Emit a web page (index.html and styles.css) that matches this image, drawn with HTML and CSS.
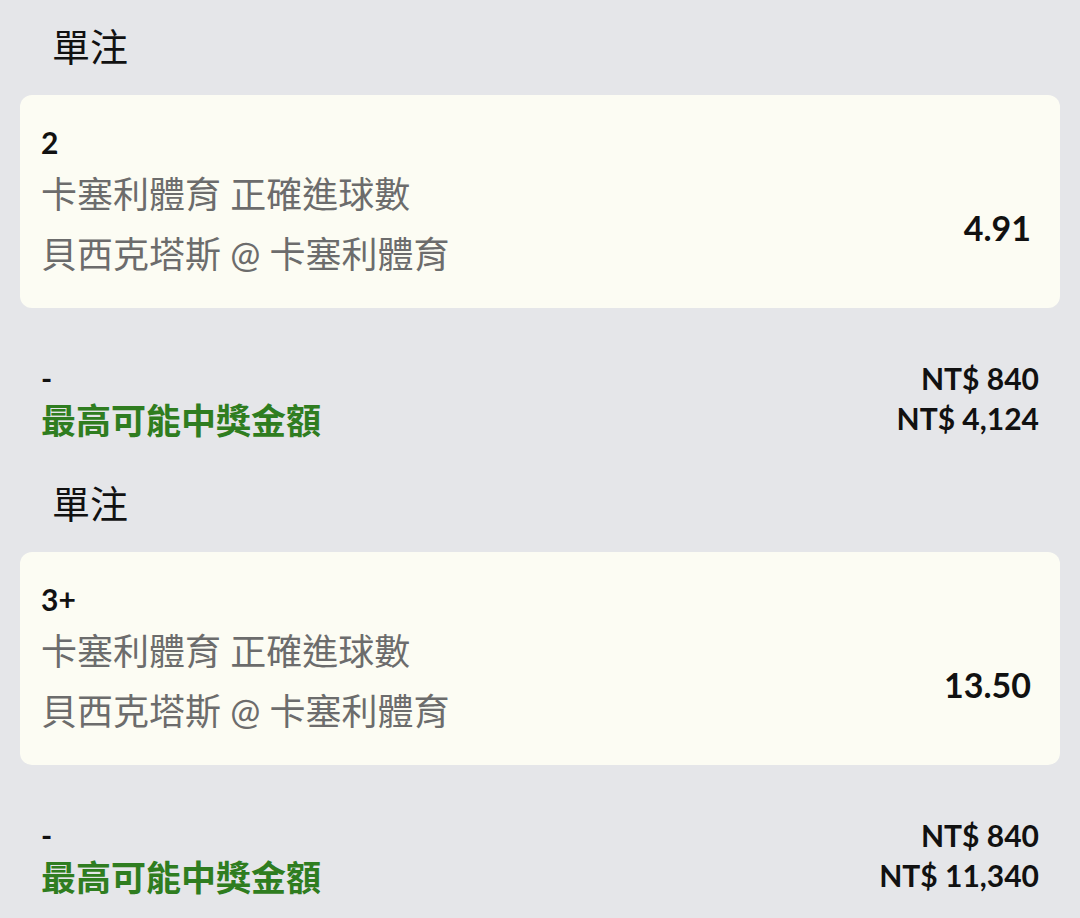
FILE: index.html
```html
<!DOCTYPE html>
<html>
<head>
	<meta charset="utf-8" />
	<title>單注</title>
	<link rel="stylesheet" href="styles.css">
</head>
<body>
	<div id="main">
		<section class="bet">
			<h2 class="bet-title">單注</h2>
			<div class="card">
				<div class="pick">2</div>
				<div class="card-body">
					<div class="info">
						<div class="line">卡塞利體育 正確進球數</div>
						<div class="line">貝西克塔斯 @ 卡塞利體育</div>
					</div>
					<div class="odds">4.91</div>
				</div>
			</div>
			<div class="summary">
				<div class="row"><span class="label">-</span><span class="amount">NT$ 840</span></div>
				<div class="row"><span class="label win">最高可能中獎金額</span><span class="amount">NT$ 4,124</span></div>
			</div>
		</section>

		<section class="bet">
			<h2 class="bet-title">單注</h2>
			<div class="card">
				<div class="pick">3+</div>
				<div class="card-body">
					<div class="info">
						<div class="line">卡塞利體育 正確進球數</div>
						<div class="line">貝西克塔斯 @ 卡塞利體育</div>
					</div>
					<div class="odds">13.50</div>
				</div>
			</div>
			<div class="summary">
				<div class="row"><span class="label">-</span><span class="amount">NT$ 840</span></div>
				<div class="row"><span class="label win">最高可能中獎金額</span><span class="amount">NT$ 11,340</span></div>
			</div>
		</section>
	</div>
</body>
</html>
```

FILE: styles.css
```css
html, body {
	padding: 0;
	margin: 0;
}
body {
	background-color: #e5e6e9;
	font-family: Lato, "Noto Sans CJK TC", sans-serif;
	color: #111;
}
#main {
	padding: 21px 20px 0 20px;
}
.bet {
	margin-bottom: 40px;
}
.bet-title {
	margin: 0 0 24px 0;
	padding-left: 32px;
	font-size: 38px;
	font-weight: normal;
	line-height: 50px;
}
.card {
	background-color: #fcfcf3;
	border-radius: 12px;
	padding: 25px 29px 24px 21px;
}
.pick {
	font-size: 30px;
	font-weight: bold;
	line-height: 44px;
}
.card-body {
	display: flex;
	align-items: center;
	justify-content: space-between;
}
.line {
	font-size: 36px;
	line-height: 60px;
	color: #6c6c6c;
}
.odds {
	font-size: 34px;
	font-weight: bold;
	padding-top: 6px;
}
.summary {
	margin-top: 50px;
	padding: 0 21px;
}
.row {
	display: flex;
	justify-content: space-between;
	align-items: center;
	height: 40px;
}
.label {
	font-size: 30px;
	font-weight: bold;
}
.label.win {
	font-size: 35px;
	color: #2f7d20;
}
.amount {
	font-size: 30px;
	font-weight: bold;
}
```
